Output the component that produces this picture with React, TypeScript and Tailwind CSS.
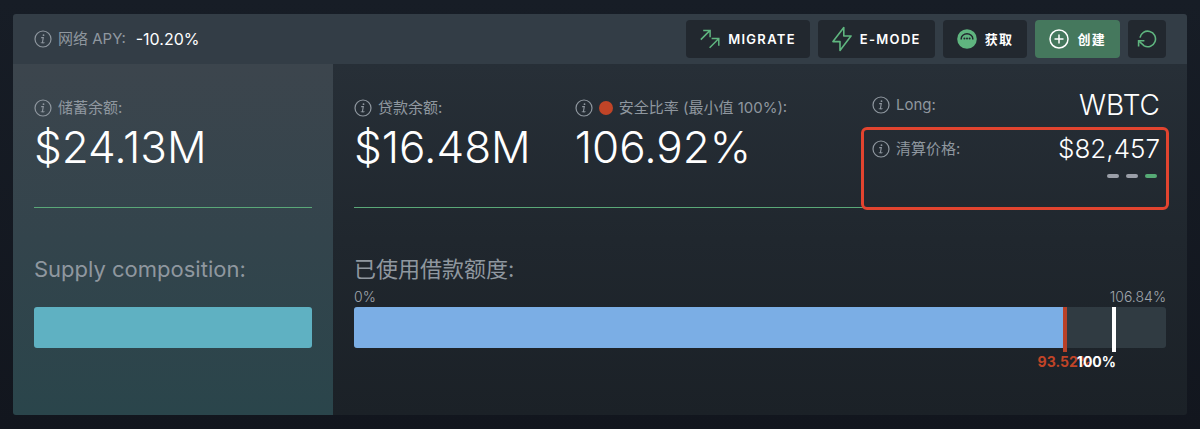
import React from "react";
import type { ReactNode } from "react";

const MAX_RATIO = 106.84;
const CURRENT_RATIO = 93.52;
const MIN_RATIO = 100;

const toPercent = (value: number) => `${(value / MAX_RATIO) * 100}%`;

function InfoIcon() {
  return (
    <svg
      className="size-[18px] shrink-0"
      viewBox="0 0 18 18"
      fill="none"
      stroke="currentColor"
      aria-hidden="true"
    >
      <circle cx="9" cy="9" r="8" strokeWidth="1.2" />
      <path d="M7.2 7.6h2.1l-.8 4.6c-.1.8.7 1 1.9.4M6.8 12.8h1" strokeWidth="1.1" />
      <circle cx="9.5" cy="5.2" r=".9" fill="currentColor" stroke="none" />
    </svg>
  );
}

function MigrateIcon() {
  return (
    <svg
      className="size-5 shrink-0 text-[#5fb57f]"
      viewBox="0 0 20 20"
      fill="none"
      stroke="currentColor"
      strokeWidth="1.5"
      aria-hidden="true"
    >
      <path d="M.8 10.6 9.8 1.6M3.2 1.4h6.900v6.900" />
      <path d="M9.600 18.800l9-9M11.600 9.600h7.200v7.200" />
    </svg>
  );
}

function BoltIcon() {
  return (
    <svg
      className="h-[26px] w-5 shrink-0 text-[#5fb57f]"
      viewBox="0 0 20 26"
      fill="none"
      stroke="currentColor"
      strokeWidth="1.6"
      strokeLinejoin="round"
      aria-hidden="true"
    >
      <path d="M11.8 1.5 1 15.6h7L8 24.5 19 10h-7.2z" />
    </svg>
  );
}

function GetIcon() {
  return (
    <svg className="size-5 shrink-0" viewBox="0 0 20 20" aria-hidden="true">
      <circle cx="10" cy="10" r="9.8" fill="#5fb57f" />
      <path
        d="M4.2 10.600v-.8a5.800 5 0 0 1 11.600 0v.8"
        fill="none"
        stroke="#22282f"
        strokeWidth="1.5"
      />
      <circle cx="7.4" cy="9.6" r="1" fill="#22282f" />
      <circle cx="10" cy="9.6" r="1" fill="#22282f" />
      <circle cx="12.6" cy="9.6" r="1" fill="#22282f" />
    </svg>
  );
}

function PlusIcon() {
  return (
    <svg
      className="size-5 shrink-0"
      viewBox="0 0 20 20"
      fill="none"
      stroke="currentColor"
      strokeWidth="1.5"
      aria-hidden="true"
    >
      <circle cx="10" cy="10" r="9" />
      <path d="M10 5.5v9M5.5 10h9" />
    </svg>
  );
}

function RefreshIcon() {
  return (
    <svg
      className="size-5 shrink-0 text-[#5fb57f]"
      viewBox="0 0 20 20"
      fill="none"
      stroke="currentColor"
      strokeWidth="1.6"
      aria-hidden="true"
    >
      <path d="M3 8.600a7.800 7.800 0 1 1 4.200 8.300L2.200 12.300" />
      <path d="M1.600 17.600v-5.800h5.800" />
    </svg>
  );
}

function HeaderButton({ icon, children }: { icon: ReactNode; children: ReactNode }) {
  return (
    <button
      type="button"
      className="flex h-[38px] items-center gap-2 rounded bg-[#22282f] px-3.5 text-[13px] leading-5 font-semibold tracking-widest text-white"
    >
      {icon}
      {children}
    </button>
  );
}

function Label({ children }: { children: ReactNode }) {
  return (
    <div className="flex h-5 items-center gap-1.5 text-[15px] leading-5 whitespace-nowrap text-[#8f979f]">
      <InfoIcon />
      {children}
    </div>
  );
}

function Stat({ label, value }: { label: ReactNode; value: string }) {
  return (
    <div>
      <Label>{label}</Label>
      <div className="mt-1 text-[44px] leading-[50px] font-light text-white">{value}</div>
    </div>
  );
}

export default function App() {
  return (
    <div className="bg-linear-to-b from-[#171d26] to-[#12161e] px-[13px] py-3.5 font-['Inter','Noto_Sans_CJK_SC',sans-serif]">
      <main className="overflow-hidden rounded-[3px]">
        <header className="flex h-[50px] items-center justify-between bg-[#333d46] px-[21px]">
          <div className="flex items-center gap-2.5">
            <Label>网络 APY:</Label>
            <span className="text-base leading-5 text-white">-10.20%</span>
          </div>

          <div className="flex items-center gap-2">
            <HeaderButton icon={<MigrateIcon />}>MIGRATE</HeaderButton>
            <HeaderButton icon={<BoltIcon />}>E-MODE</HeaderButton>
            <HeaderButton icon={<GetIcon />}>获取</HeaderButton>
            <button
              type="button"
              className="flex h-[38px] items-center gap-2 rounded bg-[#45785d] px-3.5 text-[13px] leading-5 font-semibold tracking-widest text-white"
            >
              <PlusIcon />
              创建
            </button>
            <button
              type="button"
              aria-label="刷新"
              className="flex size-[38px] items-center justify-center rounded bg-[#22282f]"
            >
              <RefreshIcon />
            </button>
          </div>
        </header>

        <div className="flex">
          {/* supply */}
          <section className="w-80 shrink-0 bg-linear-to-b from-[#3c454d] via-[#33444c] to-[#2a454b] px-[21px] pb-[67px]">
            <div className="border-b border-[#5aa878] pt-[34px] pb-[35px]">
              <Stat label="储蓄余额:" value="$24.13M" />
            </div>
            <h2 className="mt-[47px] text-[22px] leading-7 text-[#8f979f]">Supply composition:</h2>
            <div className="mt-6 h-[41px] rounded-[3px] bg-[#5fb1c2]" />
          </section>

          {/* borrow */}
          <section className="min-w-0 flex-1 bg-linear-to-b from-[#272f37] via-[#20272e] to-[#1b2127] px-[21px] pb-[67px]">
            <div className="flex justify-between border-b border-[#5aa878] pt-[23px]">
              <div className="flex gap-11 pt-[11px] pb-[35px]">
                <Stat label="贷款余额:" value="$16.48M" />
                <Stat
                  label={
                    <>
                      <span className="size-3.5 rounded-full bg-[#c04427]" />
                      安全比率 (最小值 100%):
                    </>
                  }
                  value="106.92%"
                />
              </div>

              <div className="mr-1.5 flex w-72 flex-col gap-2">
                <div className="flex h-9 items-center justify-between">
                  <Label>Long:</Label>
                  <span className="text-[28px] leading-9 font-light text-white">WBTC</span>
                </div>
                <div className="relative flex-1">
                  <div className="flex h-9 items-center justify-between">
                    <Label>清算价格:</Label>
                    <span className="text-[26px] leading-9 font-light text-white">$82,457</span>
                  </div>
                  <div className="mt-[7px] mr-[3px] flex justify-end gap-[7px]">
                    <span className="h-1 w-3 rounded-full bg-[#9a9fa8]" />
                    <span className="h-1 w-3 rounded-full bg-[#9a9fa8]" />
                    <span className="h-1 w-3 rounded-full bg-[#56aa75]" />
                  </div>
                  <div className="pointer-events-none absolute -top-1 -right-[9px] -bottom-[3px] -left-[11px] rounded-md border-3 border-[#e2442f]" />
                </div>
              </div>
            </div>

            <h2 className="mt-[47px] text-[22px] leading-7 text-[#8f979f]">已使用借款额度:</h2>
            <div className="mt-1 flex justify-between text-[14px] leading-5 font-light text-[#a0a6ad]">
              <span>0%</span>
              <span>{MAX_RATIO}%</span>
            </div>
            <div className="relative h-[41px] rounded-[3px] bg-[#303b42]">
              <div
                className="h-full rounded-l-[3px] bg-[#7baee5]"
                style={{ width: toPercent(CURRENT_RATIO) }}
              />
              <div
                className="absolute top-0 flex h-[45px] w-1 -translate-x-1/2 justify-center bg-[#b94128]"
                style={{ left: toPercent(CURRENT_RATIO) }}
              >
                <span className="absolute top-full text-sm leading-5 font-bold text-[#c04427]">
                  {CURRENT_RATIO}%
                </span>
              </div>
              <div
                className="absolute top-0 h-[45px] w-1 -translate-x-1/2 bg-white"
                style={{ left: toPercent(MIN_RATIO) }}
              >
                <span className="absolute top-full right-0 text-sm leading-5 font-bold text-white">
                  {MIN_RATIO}%
                </span>
              </div>
            </div>
          </section>
        </div>
      </main>
    </div>
  );
}
